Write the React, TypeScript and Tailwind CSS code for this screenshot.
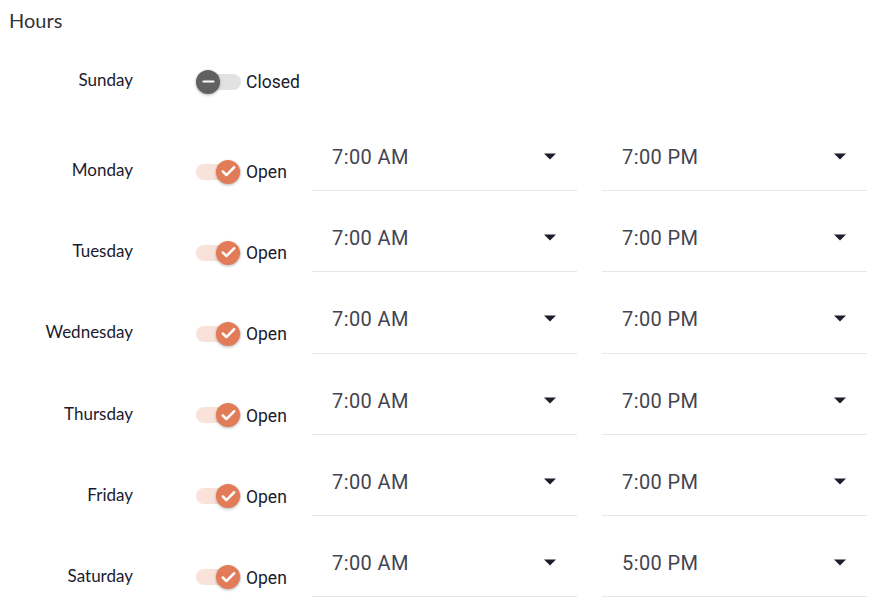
import { Check, Minus } from "lucide-react";

type Day = { name: string; open: boolean; from?: string; to?: string };

const days: Day[] = [
    { name: "Sunday", open: false },
    { name: "Monday", open: true, from: "7:00 AM", to: "7:00 PM" },
    { name: "Tuesday", open: true, from: "7:00 AM", to: "7:00 PM" },
    { name: "Wednesday", open: true, from: "7:00 AM", to: "7:00 PM" },
    { name: "Thursday", open: true, from: "7:00 AM", to: "7:00 PM" },
    { name: "Friday", open: true, from: "7:00 AM", to: "7:00 PM" },
    { name: "Saturday", open: true, from: "7:00 AM", to: "5:00 PM" },
];

function Toggle({ open }: { open: boolean }) {
    return (
        <div className="relative h-[24px] w-[45px] shrink-0">
            <div
                className={
                    "absolute left-0 top-[4px] h-[16px] w-[45px] rounded-full " +
                    (open ? "bg-[#f9e2da]" : "bg-[#e2e2e2]")
                }
            />
            {open ? (
                <div className="absolute left-[20px] top-0 flex h-[24px] w-[24px] items-center justify-center rounded-full bg-[#e27b58] shadow-[0_1px_3px_rgba(0,0,0,0.3)]">
                    <Check className="h-[17px] w-[17px] text-white" strokeWidth={3.5} />
                </div>
            ) : (
                <div className="absolute left-0 top-0 flex h-[24px] w-[24px] items-center justify-center rounded-full bg-[#616161] shadow-[0_1px_3px_rgba(0,0,0,0.3)]">
                    <Minus className="h-[17px] w-[17px] text-white" strokeWidth={3} />
                </div>
            )}
        </div>
    );
}

function TimeSelect({ value }: { value: string }) {
    return (
        <div className="flex h-full w-[265px] items-center border-b border-[#e6e6ea] pl-[20px] pr-[21px] pt-[14px]">
            <span className="flex-1 text-[20px] tracking-[0.4px] text-[#44444f] [font-family:Roboto,sans-serif]">
                {value}
            </span>
            <svg width="12" height="7" viewBox="0 0 12 7" className="mb-[1px]">
                <path d="M0 0.5h12L6 6.5z" fill="#1c1c2b" />
            </svg>
        </div>
    );
}

export default function App() {
    return (
        <div className="w-[885px] bg-white pl-[9px] [font-family:Lato,sans-serif]">
            <h2 className="pt-[8px] text-[20px] leading-[24px] text-[#333]">Hours</h2>

            {days.map((day) => (
                <div
                    key={day.name}
                    className={"flex " + (day.open ? "h-[81.2px]" : "h-[78px]")}
                >
                    <div
                        className={
                            "flex items-start " + (day.open ? "pt-[48px]" : "pt-[36px]")
                        }
                    >
                        <span className="w-[124px] text-right text-[17px] leading-[24px] text-[#1b1b2e]">
                            {day.name}
                        </span>
                        <div className="ml-[63px] mt-[1px] flex items-center">
                            <Toggle open={day.open} />
                            <span className="ml-[5px] mt-[1px] text-[17.5px] leading-[24px] text-[#1b1b2e] [font-family:Roboto,sans-serif]">
                                {day.open ? "Open" : "Closed"}
                            </span>
                        </div>
                    </div>
                    {day.open && (
                        <div className="ml-auto mr-[18px] flex gap-[25px]">
                            <TimeSelect value={day.from!} />
                            <TimeSelect value={day.to!} />
                        </div>
                    )}
                </div>
            ))}
        </div>
    );
}
